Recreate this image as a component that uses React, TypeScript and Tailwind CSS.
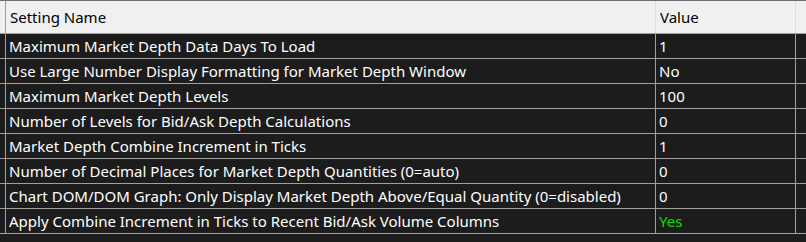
const rows: { name: string; value: string; green?: boolean }[] = [
  { name: "Maximum Market Depth Data Days To Load", value: "1" },
  { name: "Use Large Number Display Formatting for Market Depth Window", value: "No" },
  { name: "Maximum Market Depth Levels", value: "100" },
  { name: "Number of Levels for Bid/Ask Depth Calculations", value: "0" },
  { name: "Market Depth Combine Increment in Ticks", value: "1" },
  { name: "Number of Decimal Places for Market Depth Quantities (0=auto)", value: "0" },
  { name: "Chart DOM/DOM Graph: Only Display Market Depth Above/Equal Quantity (0=disabled)", value: "0" },
  { name: "Apply Combine Increment in Ticks to Recent Bid/Ask Volume Columns", value: "Yes", green: true },
];

export default function App() {
  return (
    <div
      className="w-[806px] h-[242px] overflow-hidden bg-[#1c1c1c] text-[15px]"
      style={{ fontFamily: '"Noto Sans", "Open Sans", sans-serif' }}
    >
      {/* header */}
      <div className="flex h-[34px] bg-[#f0f0f0] border-t border-[#6e6e6e] border-b border-b-[#a0a0a0] text-[#000]">
        <div className="w-[6px] border-r border-[#a0a0a0]" />
        <div className="w-[650px] border-r border-[#dcdcdc] flex items-center pl-[4px] pt-[1px]">
          Setting Name
        </div>
        <div className="w-[140px] border-r border-[#dcdcdc] flex items-center pl-[4px] pt-[1px]">
          Value
        </div>
        <div className="flex-1" />
      </div>

      {/* rows */}
      {rows.map((r) => (
        <div key={r.name} className="flex h-[25px] border-b border-[#a0a0a0] text-white">
          <div className="w-[6px] border-r border-[#a0a0a0]" />
          <div className="w-[650px] border-r border-[#a0a0a0] flex items-center pl-[3px] whitespace-nowrap">
            {r.name}
          </div>
          <div
            className={
              "w-[140px] border-r border-[#a0a0a0] flex items-center pl-[3px] " +
              (r.green ? "text-[#00e000]" : "")
            }
          >
            {r.value}
          </div>
          <div className="flex-1" />
        </div>
      ))}
    </div>
  );
}
